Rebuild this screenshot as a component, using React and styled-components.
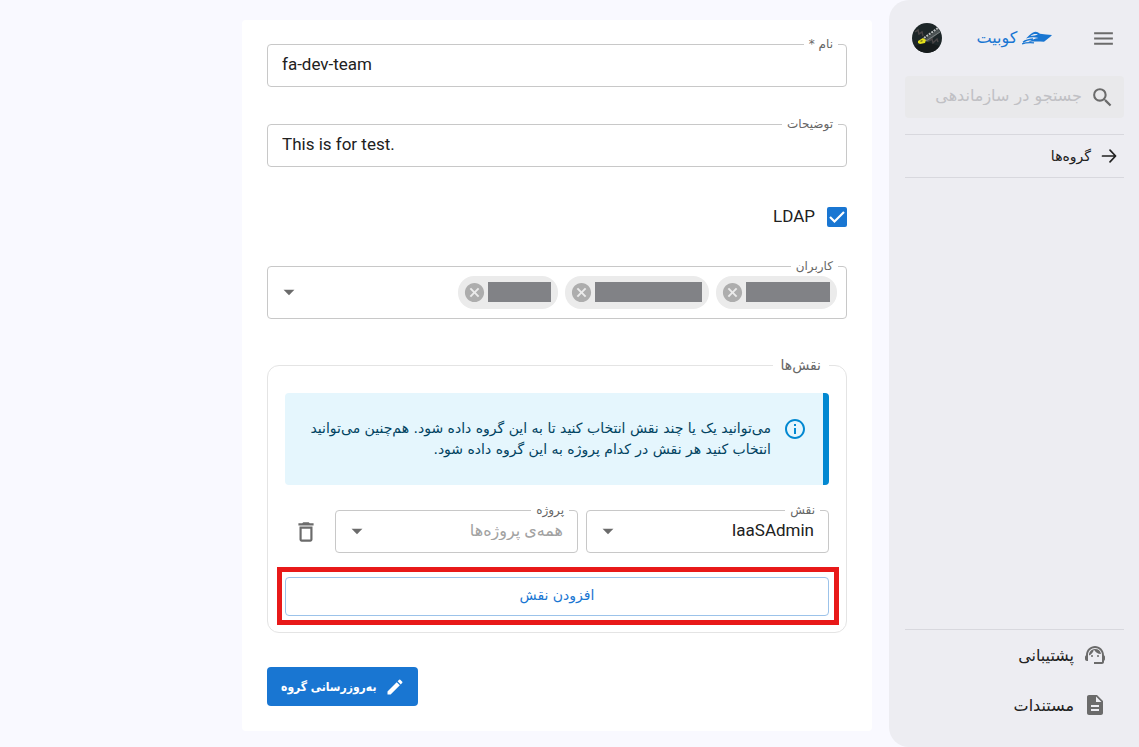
import React, { useState } from "react";
import styled, { createGlobalStyle, ThemeProvider } from "styled-components";
import {
	MdArrowDropDown,
	MdCancel,
	MdDeleteOutline,
	MdDescription,
	MdEdit,
	MdInfoOutline,
	MdMenu,
	MdSearch,
	MdSupportAgent,
} from "react-icons/md";

const theme = {
	primary: "#1976d2",
	text: "#212121",
	muted: "#666666",
	icon: "#6b6b6b",
	placeholder: "#a2a2a2",
	outline: "#c8c8c8",
	sidebar: "#ededf2",
	page: "#f9f9ff",
	latin: 'Roboto, "DejaVu Sans", sans-serif',
};

const users = [
	{ id: 1, width: 84 },
	{ id: 2, width: 107 },
	{ id: 3, width: 63 },
];

const Avatar = () => (
	<svg width="30" height="30" viewBox="0 0 30 30" aria-hidden="true">
		<defs>
			<clipPath id="avatarClip">
				<circle cx="15" cy="15" r="15" />
			</clipPath>
		</defs>
		<g clipPath="url(#avatarClip)">
			<rect width="30" height="30" fill="#1d2628" />
			<path d="M0 24 15 19l15 5v6H0z" fill="#161b1c" />
			<path d="M12 17 26 6l3 2-13 11z" fill="#4c5354" />
			<path d="M12 15 26 5" stroke="#b9bdbd" strokeWidth="2" strokeDasharray="2 1" />
			<path d="M14 18 28 9" stroke="#7c8283" strokeWidth="1" />
			<path d="m3 9 3-2 1 4 3-2 1 4M17 18l3-2 1 4 4-4 1 3" stroke="#4a4546" strokeWidth="1.4" fill="none" />
			<path d="m6 18 5-3 3 2-1 3-5 1-2-1z" fill="#e4e01c" />
			<path d="m8 18 2-1 1 1-2 1z" fill="#77751a" />
		</g>
	</svg>
);

const BoatLogo = () => (
	<svg width="30" height="14" viewBox="0 0 30 14" aria-hidden="true">
		<path
			d="M4 7.500C6 5.500 8.500 3 11 1.500 13.500.2 15.500.6 18 2.800c4 .5 8 .9 12 1.200-2 2.200-5 4.500-8 6.800-5-.4-10-.6-15.500.2 3-2.200 6-3.300 10-4C12.500 6 8.500 6.200 4 7.500z"
			fill="#1976d2"
		/>
		<path d="M8.500 5c2.500-2 4.500-2.200 7.500-1.600-2 .8-4.500 1-7.500 1.600z" fill="#ededf2" />
		<path
			d="M1 11.200C4 9 7 8.400 11 8M0 13c4-1.700 8-1.600 12-1.200"
			stroke="#1976d2"
			strokeWidth="1.300"
			fill="none"
		/>
	</svg>
);

const ArrowIcon = () => (
	<svg width="16" height="16" viewBox="0 0 16 16" aria-hidden="true">
		<path
			d="M1.500 8h13M9 2.200 14.600 8 9 13.800"
			stroke="#212121"
			strokeWidth="1.700"
			strokeLinecap="round"
			strokeLinejoin="round"
			fill="none"
		/>
	</svg>
);

const Sidebar = () => (
	<Aside>
		<TopBar>
			<IconButton type="button" aria-label="منو">
				<MdMenu size={25} />
			</IconButton>
			<Brand href="#home">
				<BoatLogo />
				کوبیت
			</Brand>
			<IconButton type="button" aria-label="حساب کاربری">
				<Avatar />
			</IconButton>
		</TopBar>
		<SearchBox>
			<MdSearch size={25} />
			<SearchInput type="search" aria-label="جستجو" placeholder="جستجو در سازماندهی" />
		</SearchBox>
		<Menu>
			<MenuLink href="#groups">
				<ArrowIcon />
				گروه‌ها
			</MenuLink>
		</Menu>
		<FooterMenu>
			<FooterLink href="#support">
				<MdSupportAgent size={24} />
				پشتیبانی
			</FooterLink>
			<FooterLink href="#docs">
				<MdDescription size={24} />
				مستندات
			</FooterLink>
		</FooterMenu>
	</Aside>
);

const TextField = ({ id, label, defaultValue }) => (
	<Outline>
		<Legend>
			<label htmlFor={id}>{label}</label>
		</Legend>
		<Input id={id} dir="ltr" defaultValue={defaultValue} />
	</Outline>
);

const SelectField = ({ id, label, option, empty }) => (
	<Outline>
		<Legend>
			<label htmlFor={id}>{label}</label>
		</Legend>
		<SelectRow>
			<Select id={id} $empty={empty}>
				<option>{option}</option>
			</Select>
			<SelectArrow size={26} />
		</SelectRow>
	</Outline>
);

const App = () => {
	const [ldap, setLdap] = useState(true);

	return (
		<ThemeProvider theme={theme}>
			<GlobalStyle />
			<Page dir="rtl" lang="fa">
				<Sidebar />
				<Main>
					<Card onSubmit={(e) => e.preventDefault()}>
						<Fields>
							<TextField id="name" label="نام *" defaultValue="fa-dev-team" />
							<TextField id="description" label="توضیحات" defaultValue="This is for test." />
						</Fields>

						<CheckLabel>
							<CheckWrapper>
								<Checkbox
									type="checkbox"
									checked={ldap}
									onChange={(e) => setLdap(e.target.checked)}
								/>
								<CheckMark viewBox="0 0 20 20" aria-hidden="true">
									<path d="m3 10 4.500 4.500L17 5" stroke="#fff" strokeWidth="2.200" fill="none" />
								</CheckMark>
							</CheckWrapper>
							<CheckText>LDAP</CheckText>
						</CheckLabel>

						<Outline>
							<Legend>
								<label htmlFor="users">کاربران</label>
							</Legend>
							<UsersRow>
								{users.map((user) => (
									<Chip key={user.id}>
										<ChipText style={{ width: user.width }} />
										<ChipRemove type="button" aria-label="حذف کاربر">
											<MdCancel size={23} />
										</ChipRemove>
									</Chip>
								))}
								<UsersInput id="users" />
								<IconButton type="button" aria-label="باز کردن">
									<MdArrowDropDown size={26} />
								</IconButton>
							</UsersRow>
						</Outline>

						<Roles>
							<RolesLegend>نقش‌ها</RolesLegend>
							<Alert role="note">
								<MdInfoOutline size={24} />
								<AlertText>
									می‌توانید یک یا چند نقش انتخاب کنید تا به این گروه داده شود. هم‌چنین می‌توانید انتخاب کنید هر
									نقش در کدام پروژه به این گروه داده شود.
								</AlertText>
							</Alert>
							<RoleRow>
								<SelectField id="role" label="نقش" option="IaaSAdmin" />
								<SelectField id="project" label="پروژه" option="همه‌ی پروژه‌ها" empty />
								<DeleteButton type="button" aria-label="حذف نقش">
									<MdDeleteOutline size={26} />
								</DeleteButton>
							</RoleRow>
							<Highlight>
								<AddButton type="button">افزودن نقش</AddButton>
							</Highlight>
						</Roles>

						<SubmitButton type="submit">
							<MdEdit size={20} />
							به‌روزرسانی گروه
						</SubmitButton>
					</Card>
				</Main>
			</Page>
		</ThemeProvider>
	);
};

export default App;

const GlobalStyle = createGlobalStyle`
	* {
		box-sizing: border-box;
	}
	body {
		margin: 0;
		background: ${({ theme }) => theme.page};
		color: ${({ theme }) => theme.text};
	}
	body, button, input, select {
		font-family: "DejaVu Sans", sans-serif;
	}
	a {
		color: inherit;
		text-decoration: none;
	}
	svg {
		display: block;
		flex-shrink: 0;
	}
`;
const Page = styled.div`
	display: flex;
	min-height: 100vh;
`;
const Aside = styled.aside`
	display: flex;
	flex-direction: column;
	flex: 0 0 250px;
	min-width: 0;
	padding: 20px 15px 17px 16px;
	background: ${({ theme }) => theme.sidebar};
	border-radius: 20px 0 0 20px;
`;
const TopBar = styled.div`
	display: flex;
	align-items: center;
	justify-content: space-between;
	height: 36px;
	padding: 0 8px 0 7px;
`;
const IconButton = styled.button`
	display: flex;
	padding: 0;
	border: none;
	background: none;
	color: ${({ theme }) => theme.icon};
	cursor: pointer;
`;
const Brand = styled.a`
	display: flex;
	align-items: center;
	gap: 5px;
	padding-right: 4px;
	font-size: 16px;
	line-height: 24px;
	color: ${({ theme }) => theme.primary};
`;
const SearchBox = styled.div`
	display: flex;
	align-items: center;
	gap: 8px;
	height: 42px;
	margin-top: 20px;
	padding: 0 9px;
	background: #e9e9eb;
	border-radius: 4px;
	color: ${({ theme }) => theme.icon};
`;
const SearchInput = styled.input`
	flex: 1;
	min-width: 0;
	padding: 0 0 3px;
	border: none;
	outline: none;
	background: none;
	font-size: 16px;
	&::placeholder {
		color: #c0c0c4;
		opacity: 1;
	}
`;
const Menu = styled.nav`
	margin-top: 16px;
	border-top: 1px solid #d8d8de;
	border-bottom: 1px solid #d8d8de;
`;
const MenuLink = styled.a`
	display: flex;
	align-items: center;
	gap: 10px;
	height: 42px;
	padding: 0 7px;
	font-size: 14px;
`;
const FooterMenu = styled.nav`
	display: flex;
	flex-direction: column;
	margin-top: auto;
	border-top: 1px solid #d8d8de;
`;
const FooterLink = styled.a`
	display: flex;
	align-items: center;
	gap: 9px;
	height: 50px;
	padding: 0 17px;
	font-size: 16px;
	svg {
		color: ${({ theme }) => theme.icon};
	}
`;
const Main = styled.main`
	flex: 1;
	min-width: 0;
	padding: 20px 17px 16px;
`;
const Card = styled.form`
	display: flex;
	flex-direction: column;
	max-width: 630px;
	padding: 16px 25px 25px;
	background: #ffffff;
	border-radius: 4px;
`;
const Fields = styled.div`
	display: flex;
	flex-direction: column;
	gap: 29px;
`;
const Outline = styled.fieldset`
	flex: 1;
	min-width: 0;
	margin: 0;
	padding: 0 8px;
	border: 1px solid ${({ theme }) => theme.outline};
	border-radius: 4px;
`;
const Legend = styled.legend`
	padding: 0 5px;
	font-size: 12px;
	line-height: 16px;
	color: ${({ theme }) => theme.muted};
`;
const Input = styled.input`
	display: block;
	width: 100%;
	height: 34px;
	padding: 0 6px 11px;
	border: none;
	outline: none;
	background: none;
	font-family: ${({ theme }) => theme.latin};
	font-size: 17px;
	color: inherit;
`;
const CheckLabel = styled.label`
	display: flex;
	align-items: center;
	align-self: flex-start;
	gap: 12px;
	margin: 38px 0 29px;
	font-family: ${({ theme }) => theme.latin};
	font-size: 17px;
	line-height: 20px;
`;
const CheckText = styled.span`
	padding: 1px 0 3px;
`;
const CheckWrapper = styled.span`
	position: relative;
	display: flex;
`;
const Checkbox = styled.input`
	appearance: none;
	width: 20px;
	height: 20px;
	margin: 0;
	border: 2px solid ${({ theme }) => theme.icon};
	border-radius: 2px;
	&:checked {
		border-color: ${({ theme }) => theme.primary};
		background: ${({ theme }) => theme.primary};
	}
`;
const CheckMark = styled.svg`
	position: absolute;
	inset: 0;
	pointer-events: none;
`;
const UsersRow = styled.div`
	display: flex;
	align-items: center;
	gap: 7px;
	height: 44px;
	padding: 0 1px 8px 0;
`;
const Chip = styled.div`
	display: flex;
	align-items: center;
	gap: 2px;
	height: 33px;
	padding: 0 7px 0 5px;
	background: #ebebeb;
	border-radius: 16px;
`;
const ChipText = styled.span`
	height: 20px;
	background: #818286;
`;
const ChipRemove = styled(IconButton)`
	color: #adadad;
`;
const UsersInput = styled.input`
	flex: 1;
	min-width: 0;
	border: none;
	outline: none;
	background: none;
	font-size: 16px;
`;
const Roles = styled.fieldset`
	min-width: 0;
	margin: 36px 0 0;
	padding: 18px 17px 7px;
	border: 1px solid #e4e4e4;
	border-radius: 12px;
`;
const RolesLegend = styled.legend`
	padding: 0 8px;
	font-size: 14px;
	line-height: 20px;
	color: ${({ theme }) => theme.muted};
`;
const Alert = styled.div`
	display: flex;
	gap: 12px;
	padding: 24px 16px 25px 8px;
	background: #e5f6fd;
	border-right: 6px solid #0288d1;
	border-radius: 4px;
	svg {
		color: #0288d1;
	}
`;
const AlertText = styled.p`
	margin: 0;
	padding-top: 1px;
	font-size: 14px;
	line-height: 21px;
	color: #014361;
`;
const RoleRow = styled.div`
	display: flex;
	gap: 8px;
	margin-top: 17px;
`;
const SelectRow = styled.div`
	position: relative;
`;
const Select = styled.select`
	display: block;
	appearance: none;
	width: 100%;
	height: 34px;
	padding: 0 6px 10px 28px;
	border: none;
	outline: none;
	background: none;
	font-family: ${({ theme }) => theme.latin};
	font-size: ${({ $empty }) => ($empty ? "16px" : "17px")};
	color: ${({ theme, $empty }) => ($empty ? theme.placeholder : theme.text)};
`;
const SelectArrow = styled(MdArrowDropDown)`
	position: absolute;
	top: 0;
	left: 0;
	color: ${({ theme }) => theme.icon};
	pointer-events: none;
`;
const DeleteButton = styled(IconButton)`
	align-items: center;
	padding: 8px 8px 0;
`;
/* callout frame round the add button */
const Highlight = styled.div`
	display: flex;
	margin: 14px -10px 0 -8px;
	padding: 5px 5px 4px 3px;
	border: 5px solid #e81919;
`;
const AddButton = styled.button`
	flex: 1;
	height: 39px;
	padding: 0 16px 3px;
	border: 1px solid #9cc3ea;
	border-radius: 4px;
	background: #ffffff;
	font-size: 14px;
	font-weight: 500;
	color: ${({ theme }) => theme.primary};
	cursor: pointer;
`;
const SubmitButton = styled.button`
	display: flex;
	align-items: center;
	align-self: flex-end;
	gap: 9px;
	height: 39px;
	margin-top: 34px;
	padding: 0 13px 0 14px;
	border: none;
	border-radius: 4px;
	background: ${({ theme }) => theme.primary};
	font-family: "DejaVu Sans Condensed", "DejaVu Sans", sans-serif;
	font-size: 12px;
	font-weight: 700;
	color: #ffffff;
	cursor: pointer;
`;
